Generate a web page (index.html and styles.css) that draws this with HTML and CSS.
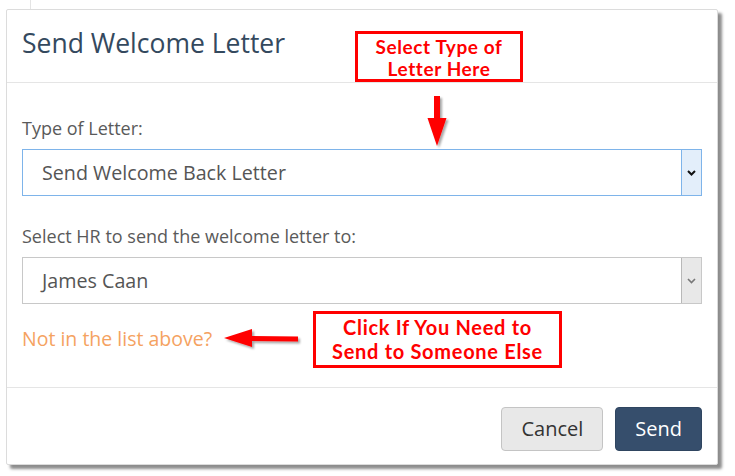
FILE: index.html
```html
<!DOCTYPE html>
<html lang="en">
<head>
    <meta charset="UTF-8">
    <meta name="viewport" content="width=device-width, initial-scale=1.0">
    <title>Send Welcome Letter</title>
    <link rel="stylesheet" href="styles.css">
</head>
<body>
    <div class="page">
        <span class="back-line"></span>

        <div class="modal">
            <div class="modal-header">
                <h4 class="modal-title">Send Welcome Letter</h4>
            </div>

            <div class="modal-body">
                <label class="field-label">Type of Letter:</label>
                <div class="select is-focus">
                    <span class="select-value">Send Welcome Back Letter</span>
                    <span class="select-btn">
                        <svg width="9" height="6" viewBox="0 0 9 6"><polyline points="1,1 4.5,4.5 8,1" fill="none" stroke="currentColor" stroke-width="2"/></svg>
                    </span>
                </div>

                <label class="field-label">Select HR to send the welcome letter to:</label>
                <div class="select">
                    <span class="select-value">James Caan</span>
                    <span class="select-btn">
                        <svg width="9" height="6" viewBox="0 0 9 6"><polyline points="1,1 4.5,4.5 8,1" fill="none" stroke="currentColor" stroke-width="1.6"/></svg>
                    </span>
                </div>

                <a class="other-link" href="#">Not in the list above?</a>
            </div>

            <div class="modal-footer">
                <button class="btn btn-cancel">Cancel</button>
                <button class="btn btn-send">Send</button>
            </div>
        </div>

        <!-- annotations drawn over the dialog -->
        <div class="callout callout-type">Select Type of<br>Letter Here</div>
        <svg class="arrow arrow-down" width="30" height="60" viewBox="0 0 30 60">
            <defs>
                <filter id="shadowDown" x="-50%" y="-50%" width="200%" height="200%">
                    <feDropShadow dx="2" dy="2" stdDeviation="1.2" flood-color="#000" flood-opacity="0.35"/>
                </filter>
            </defs>
            <polygon points="12,2 18,2 18,24 24.5,24 15,52 5.5,24 12,24" fill="#ff0000" filter="url(#shadowDown)"/>
        </svg>

        <div class="callout callout-other">Click If You Need to<br>Send to Someone Else</div>
        <svg class="arrow arrow-left" width="90" height="30" viewBox="0 0 90 30">
            <defs>
                <filter id="shadowLeft" x="-50%" y="-50%" width="200%" height="200%">
                    <feDropShadow dx="2" dy="2" stdDeviation="1.2" flood-color="#000" flood-opacity="0.35"/>
                </filter>
            </defs>
            <polygon points="2,13 30,4 30,11 76,11.5 76,16.5 30,16 30,22" fill="#ff0000" filter="url(#shadowLeft)"/>
        </svg>
    </div>
</body>
</html>
```

FILE: styles.css
```css
body {
    margin: 0;
    background: #ffffff;
    font-family: "Open Sans", "Noto Sans", sans-serif;
}
.page {
    position: relative;
    width: 735px;
    height: 476px;
    overflow: hidden;
}
.back-line {
    position: absolute;
    left: 30px;
    top: 0;
    width: 1px;
    height: 9px;
    background: #e4e4e4;
}
.modal {
    width: 712px;
    margin: 9px 0 0 6px;
    box-sizing: border-box;
    background: #fff;
    border: 1px solid #dcdcdc;
    border-radius: 2px;
    box-shadow: 4px 4px 3px rgba(0, 0, 0, 0.45);
}
.modal-header {
    padding: 15px 15px 21px;
    border-bottom: 1px solid #e5e5e5;
}
.modal-title {
    margin: 0;
    font-size: 26.5px;
    font-weight: 400;
    line-height: 36px;
    letter-spacing: 0;
    color: #34495e;
}
.modal-body {
    display: flex;
    flex-direction: column;
    align-items: flex-start;
    padding: 33px 15px 36px;
}
.field-label {
    font-size: 18px;
    line-height: 25px;
    color: #5a5a5a;
    margin-bottom: 8px;
}
.select {
    display: flex;
    align-self: stretch;
    height: 47px;
    box-sizing: border-box;
    border: 1px solid #c8c8c8;
    margin-bottom: 28px;
}
.select-value {
    flex: 1;
    padding-left: 19px;
    font-size: 19.7px;
    line-height: 45px;
    color: #555;
}
.select-btn {
    display: flex;
    align-items: center;
    justify-content: center;
    width: 19px;
    border-left: 1px solid #b8b8b8;
    background: #e8e8e8;
    color: #777;
}
.select.is-focus {
    border-color: #7eb4ea;
}
.select.is-focus .select-btn {
    border-left-color: #7eb4ea;
    background: #e3eefa;
    color: #111;
}
.other-link {
    margin-top: -6px;
    font-size: 19.5px;
    line-height: 25px;
    color: #f5a261;
    text-decoration: none;
}
.modal-footer {
    display: flex;
    justify-content: flex-end;
    gap: 12px;
    padding: 19px 15px 13px;
    border-top: 1px solid #e5e5e5;
}
.btn {
    height: 44px;
    padding: 0 19px;
    font-family: "Open Sans", "Noto Sans", sans-serif;
    font-size: 20px;
    line-height: 40px;
    border-radius: 4px;
    cursor: pointer;
}
.btn-cancel {
    background: #e8e8e8;
    border: 1px solid #c4c4c4;
    color: #333;
}
.btn-send {
    background: #364e6c;
    border: 1px solid #2f4560;
    color: #fff;
}
.callout {
    position: absolute;
    box-sizing: border-box;
    background: #fff;
    border: 3px solid #ff0000;
    color: #ff0000;
    font-family: Lato, "DejaVu Sans", sans-serif;
    font-weight: 700;
    font-size: 19px;
    line-height: 22px;
    letter-spacing: 0.6px;
    text-align: center;
}
.callout-type {
    left: 355px;
    top: 31px;
    width: 168px;
    height: 51px;
    padding-top: 2px;
}
.callout-other {
    left: 313px;
    top: 311px;
    width: 249px;
    height: 57px;
    padding-top: 1px;
    font-size: 20px;
    line-height: 24px;
    letter-spacing: 0.7px;
}
.arrow {
    position: absolute;
}
.arrow-down {
    left: 422px;
    top: 94px;
}
.arrow-left {
    left: 222px;
    top: 325px;
}
```
